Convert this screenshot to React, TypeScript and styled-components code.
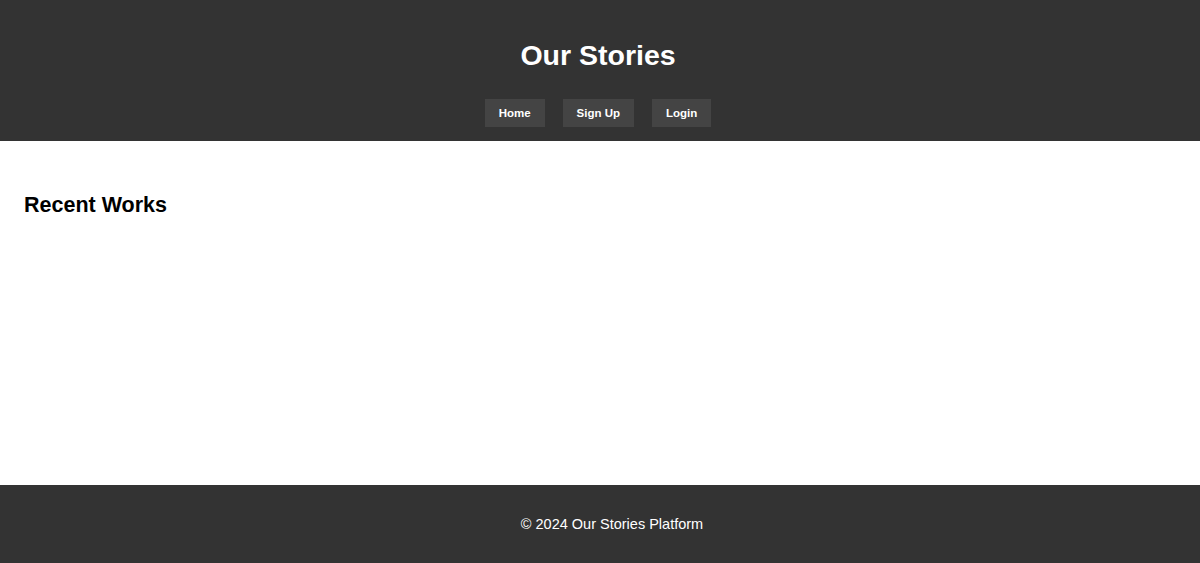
import styled, { createGlobalStyle } from 'styled-components';

const GlobalStyle = createGlobalStyle`
  * {
    box-sizing: border-box;
  }
  body {
    margin: 0;
    font-family: 'Liberation Sans', Arial, sans-serif;
    background: #fff;
    color: #000;
  }
`;

const navLinks = ['Home', 'Sign Up', 'Login'];

const App = () => {
  return (
    <>
      <GlobalStyle />
      <Header>
        <Title>Our Stories</Title>
        <Nav>
          {navLinks.map((name) => (
            <NavLink key={name} href='#'>
              {name}
            </NavLink>
          ))}
        </Nav>
      </Header>
      <Main>
        <SectionTitle>Recent Works</SectionTitle>
      </Main>
      <Footer>
        <p>&copy; 2024 Our Stories Platform</p>
      </Footer>
    </>
  );
};
export default App;

const Header = styled.header`
  background: #333;
  color: #fff;
  text-align: center;
  padding: 39px 4px 14px 0;
`;

const Title = styled.h1`
  margin: 0 0 27px;
  font-size: 28.5px;
  line-height: 33px;
  font-weight: 700;
`;

const Nav = styled.nav`
  display: flex;
  justify-content: center;
  gap: 18px;
`;

const NavLink = styled.a`
  display: inline-block;
  height: 28px;
  line-height: 28px;
  padding: 0 14px;
  background: #444;
  color: #fff;
  font-size: 11.5px;
  font-weight: 700;
  text-decoration: none;
`;

const Main = styled.main`
  height: 344px;
  padding: 52px 24px 0;
`;

const SectionTitle = styled.h2`
  margin: 0;
  font-size: 21.5px;
  line-height: 25px;
  font-weight: 700;
`;

const Footer = styled.footer`
  background: #333;
  color: #fff;
  text-align: center;
  height: 78px;
  padding: 30px 0 30px 24px;

  p {
    margin: 0;
    font-size: 14.5px;
    line-height: 18px;
  }
`;
